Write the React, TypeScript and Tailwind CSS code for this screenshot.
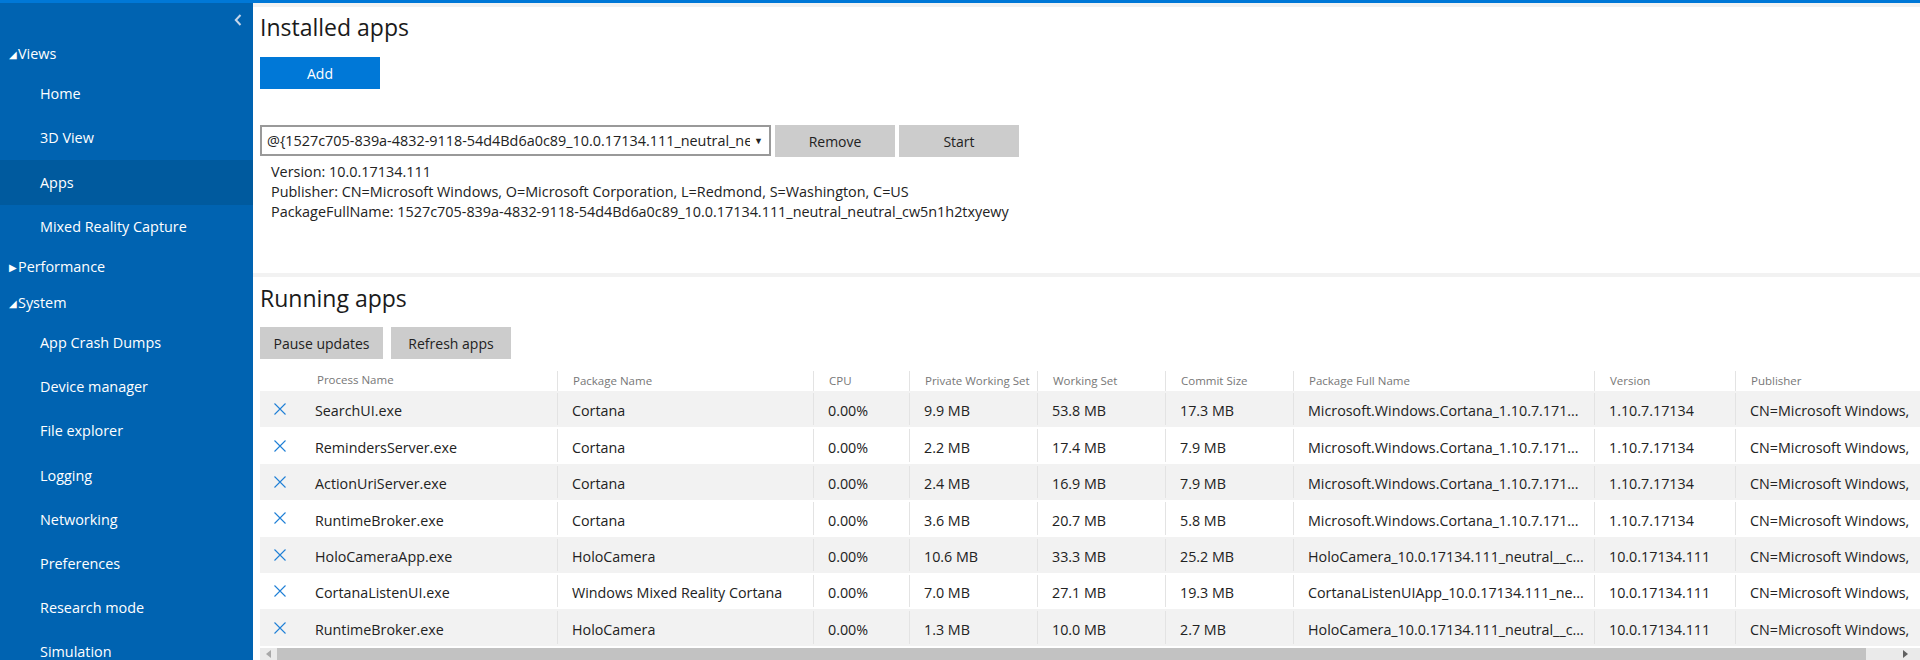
import React from "react";

const rows: string[][] = [
  ["SearchUI.exe", "Cortana", "0.00%", "9.9 MB", "53.8 MB", "17.3 MB", "Microsoft.Windows.Cortana_1.10.7.171...", "1.10.7.17134"],
  ["RemindersServer.exe", "Cortana", "0.00%", "2.2 MB", "17.4 MB", "7.9 MB", "Microsoft.Windows.Cortana_1.10.7.171...", "1.10.7.17134"],
  ["ActionUriServer.exe", "Cortana", "0.00%", "2.4 MB", "16.9 MB", "7.9 MB", "Microsoft.Windows.Cortana_1.10.7.171...", "1.10.7.17134"],
  ["RuntimeBroker.exe", "Cortana", "0.00%", "3.6 MB", "20.7 MB", "5.8 MB", "Microsoft.Windows.Cortana_1.10.7.171...", "1.10.7.17134"],
  ["HoloCameraApp.exe", "HoloCamera", "0.00%", "10.6 MB", "33.3 MB", "25.2 MB", "HoloCamera_10.0.17134.111_neutral__c...", "10.0.17134.111"],
  ["CortanaListenUI.exe", "Windows Mixed Reality Cortana", "0.00%", "7.0 MB", "27.1 MB", "19.3 MB", "CortanaListenUIApp_10.0.17134.111_ne...", "10.0.17134.111"],
  ["RuntimeBroker.exe", "HoloCamera", "0.00%", "1.3 MB", "10.0 MB", "2.7 MB", "HoloCamera_10.0.17134.111_neutral__c...", "10.0.17134.111"],
];

const publisher = "CN=Microsoft Windows,";

const colW = ["w-[256px]", "w-[96px]", "w-[128px]", "w-[128px]", "w-[128px]", "w-[301px]", "w-[141px]", "w-[420px]"];
const headers = ["Package Name", "CPU", "Private Working Set", "Working Set", "Commit Size", "Package Full Name", "Version", "Publisher"];

function XIcon() {
  return (
    <svg width="12" height="12" viewBox="0 0 12 12" className="shrink-0">
      <path d="M0.5 0.5 L11.5 11.5 M11.5 0.5 L0.5 11.5" stroke="#1f7fd6" strokeWidth="1.1" fill="none" />
    </svg>
  );
}

function NavHeader({ label, open }: { label: string; open: boolean }) {
  return (
    <div className="h-[36px] shrink-0 flex items-center pl-[9px] text-white text-[14.4px]">
      <span className="text-[10px] w-[9px] leading-none">{open ? "◢" : "▶"}</span>
      <span>{label}</span>
    </div>
  );
}

function NavItem({ label, active }: { label: string; active?: boolean }) {
  return (
    <div className={`h-[44.2px] shrink-0 flex items-center pl-[40px] text-white text-[14.4px] ${active ? "bg-[#005a9e]" : ""}`}>
      {label}
    </div>
  );
}

export default function App() {
  return (
    <div className="w-[1920px] h-[660px] overflow-hidden flex flex-col font-['Open_Sans',sans-serif] text-[#222]">
      <div className="h-[3px] bg-[#0078d7] shrink-0" />
      <div className="flex h-[657px] shrink-0">
        {/* Sidebar */}
        <div className="w-[253px] shrink-0 bg-[#0063b1] flex flex-col overflow-hidden">
          <div className="h-[33px] shrink-0 flex items-center justify-end pr-[11px]">
            <svg width="8" height="12" viewBox="0 0 8 12">
              <path d="M6.5 1 L1.8 6 L6.5 11" stroke="#c5d6ea" strokeWidth="2" fill="none" />
            </svg>
          </div>
          <NavHeader label="Views" open />
          <NavItem label="Home" />
          <NavItem label="3D View" />
          <NavItem label="Apps" active />
          <NavItem label="Mixed Reality Capture" />
          <NavHeader label="Performance" open={false} />
          <NavHeader label="System" open />
          <NavItem label="App Crash Dumps" />
          <NavItem label="Device manager" />
          <NavItem label="File explorer" />
          <NavItem label="Logging" />
          <NavItem label="Networking" />
          <NavItem label="Preferences" />
          <NavItem label="Research mode" />
          <NavItem label="Simulation" />
        </div>

        {/* Main */}
        <div className="flex-1 min-w-0 bg-[#f2f2f2] flex flex-col pt-[4px] gap-[4px]">
          {/* Installed apps */}
          <div className="bg-white h-[266px] shrink-0 pl-[7px] flex flex-col">
            <div className="mt-[4px] leading-[32px] text-[23px] text-[#1a1a1a]">Installed apps</div>
            <button className="mt-[14px] w-[120px] h-[32px] bg-[#0078d7] text-white text-[14px]">Add</button>
            <div className="mt-[36px] flex items-start gap-[4px]">
              <div className="w-[511px] h-[31px] border-2 border-[#999999] flex items-center pl-[5px] pr-[6px] text-[14.4px] text-[#222]">
                <div className="flex-1 overflow-hidden whitespace-nowrap">
                  @{"{"}1527c705-839a-4832-9118-54d4Bd6a0c89_10.0.17134.111_neutral_neu
                </div>
                <span className="text-[9px] ml-[4px]">▼</span>
              </div>
              <button className="w-[120px] h-[32px] bg-[#cccccc] text-[14px] text-[#222]">Remove</button>
              <button className="w-[120px] h-[32px] bg-[#cccccc] text-[14px] text-[#222]">Start</button>
            </div>
            <div className="mt-[5px] ml-[11px] text-[14.4px] leading-[20px] text-[#222]">
              <div>Version: 10.0.17134.111</div>
              <div>Publisher: CN=Microsoft Windows, O=Microsoft Corporation, L=Redmond, S=Washington, C=US</div>
              <div>PackageFullName: 1527c705-839a-4832-9118-54d4Bd6a0c89_10.0.17134.111_neutral_neutral_cw5n1h2txyewy</div>
            </div>
          </div>

          {/* Running apps */}
          <div className="bg-white flex-1 min-h-0 pl-[7px] flex flex-col overflow-hidden">
            <div className="mt-[5px] leading-[32px] text-[23px] text-[#1a1a1a]">Running apps</div>
            <div className="mt-[13px] flex gap-[8px]">
              <button className="w-[123px] h-[32px] bg-[#cccccc] text-[14px] text-[#222]">Pause updates</button>
              <button className="w-[120px] h-[32px] bg-[#cccccc] text-[14px] text-[#222]">Refresh apps</button>
            </div>
            <div className="mt-[10px] flex flex-col w-max">
              {/* header */}
              <div className="flex h-[22px] text-[11.5px] text-[#777777]">
                <div className="w-[297px] shrink-0 flex items-center pl-[57px]">Process Name</div>
                {headers.map((h, i) => (
                  <div key={h} className={`${colW[i]} shrink-0 flex items-center pl-[15px] border-l border-[#e3e3e3] mt-[2px]`}>
                    {h}
                  </div>
                ))}
              </div>
              {rows.map((r, ri) => (
                <div key={ri} className={`flex h-[36.4px] text-[14.3px] text-[#222] ${ri % 2 === 0 ? "bg-[#f2f2f2]" : "bg-white"}`}>
                  <div className="w-[297px] shrink-0 flex items-center pl-[14px]">
                    <XIcon />
                    <span className="ml-[29px] pt-[4px] whitespace-nowrap">{r[0]}</span>
                  </div>
                  {[...r.slice(1), publisher].map((c, ci) => (
                    <div
                      key={ci}
                      className={`${colW[ci]} shrink-0 flex items-center pl-[14px] pt-[4px] border-l border-[#e3e3e3] my-[2px] overflow-hidden whitespace-nowrap`}
                    >
                      {c}
                    </div>
                  ))}
                </div>
              ))}
            </div>
            <div className="mt-[2px] h-[12px] shrink-0 flex items-center bg-[#eaeaea] w-[1660px]">
              <div className="w-[17px] h-full flex items-center justify-center">
                <svg width="5" height="8" viewBox="0 0 5 8"><path d="M5 0 L0 4 L5 8 Z" fill="#a8a8a8" /></svg>
              </div>
              <div className="w-[1589px] h-full bg-[#c2c2c2]" />
              <div className="flex-1 h-full flex items-center justify-end pr-[12px]">
                <svg width="5" height="8" viewBox="0 0 5 8"><path d="M0 0 L5 4 L0 8 Z" fill="#606060" /></svg>
              </div>
            </div>
          </div>
        </div>
      </div>
    </div>
  );
}
